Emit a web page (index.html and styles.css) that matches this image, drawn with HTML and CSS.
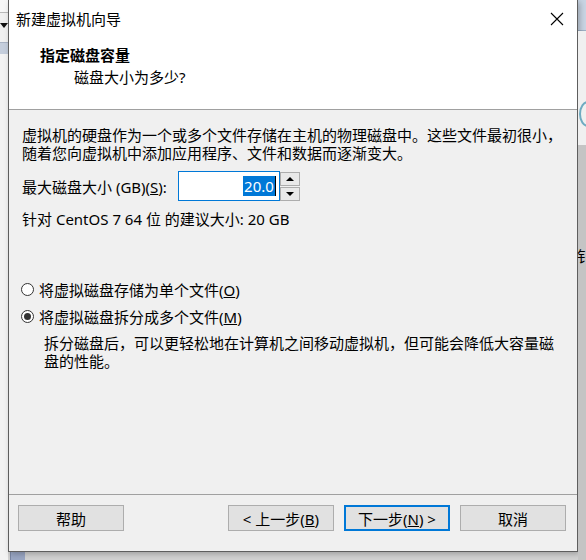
FILE: index.html
```html
<!DOCTYPE html>
<html lang="zh-CN">
<head>
    <meta charset="UTF-8">
    <meta name="viewport" content="width=device-width, initial-scale=1.0">
    <title>新建虚拟机向导</title>
    <link rel="stylesheet" href="styles.css">
</head>
<body>

    <div class="screen">
        <div class="side side-left">
            <div class="left-top"></div>
            <div class="left-arrow"></div>
            <div class="left-bar"></div>
            <div class="left-rest"></div>
        </div>

        <div class="middle">
            <div class="dialog">
                <div class="header">
                    <div class="titlebar">
                        <span class="title">新建虚拟机向导</span>
                        <svg class="close" width="14" height="14" viewBox="0 0 14 14">
                            <path d="M1 1 L13 13 M13 1 L1 13" stroke="#000" stroke-width="1.1" fill="none"/>
                        </svg>
                    </div>
                    <div class="heading">指定磁盘容量</div>
                    <div class="subheading">磁盘大小为多少?</div>
                </div>

                <div class="content">
                    <p class="intro">虚拟机的硬盘作为一个或多个文件存储在主机的物理磁盘中。这些文件最初很小，<br>随着您向虚拟机中添加应用程序、文件和数据而逐渐变大。</p>

                    <div class="size-row">
                        <label class="size-label">最大磁盘大小 (GB)(<u>S</u>):</label>
                        <div class="spin">
                            <div class="spin-input"><span class="selected">20.0</span><span class="caret"></span></div>
                            <div class="spin-buttons">
                                <div class="spin-btn"><span class="arrow-up"></span></div>
                                <div class="spin-btn"><span class="arrow-down"></span></div>
                            </div>
                        </div>
                    </div>

                    <div class="recommend">针对 CentOS 7 64 位 的建议大小: 20 GB</div>

                    <div class="radio-row first">
                        <span class="radio"></span>
                        <span>将虚拟磁盘存储为单个文件(<u>O</u>)</span>
                    </div>
                    <div class="radio-row">
                        <span class="radio checked"></span>
                        <span>将虚拟磁盘拆分成多个文件(<u>M</u>)</span>
                    </div>
                    <p class="radio-note">拆分磁盘后，可以更轻松地在计算机之间移动虚拟机，但可能会降低大容量磁<br>盘的性能。</p>
                </div>

                <div class="footer">
                    <button class="btn">帮助</button>
                    <div class="nav-buttons">
                        <button class="btn">&lt; 上一步(<u>B</u>)</button>
                        <button class="btn default">下一步(<u>N</u>) &gt;</button>
                        <button class="btn">取消</button>
                    </div>
                </div>
            </div>
            <div class="bottom-strip">
                <div class="bottom-blue"></div>
            </div>
        </div>

        <div class="side side-right">
            <div class="right-top"></div>
            <div class="right-mid"><span class="right-arc"></span></div>
            <div class="right-gray"><span class="right-char">钅</span></div>
        </div>
    </div>

</body>
</html>
```

FILE: styles.css
```css
body {
    margin: 0;
    font-family: "Noto Sans", "Noto Sans CJK SC", sans-serif;
    font-size: 15px;
    color: #000;
    background-color: #c8c8c8;
}
.screen {
    display: flex;
    width: 586px;
    height: 560px;
    overflow: hidden;
}
.side {
    width: 8px;
    display: flex;
    flex-direction: column;
}
.left-top {
    height: 12px;
    background-color: #f7f7f7;
    border-bottom: 1px solid #b9b9b9;
}
.left-arrow {
    height: 29px;
    background-color: #f0f0f0;
    position: relative;
}
.left-arrow::after {
    content: "";
    position: absolute;
    left: 0;
    top: 10px;
    border-left: 4px solid transparent;
    border-right: 4px solid transparent;
    border-top: 5px solid #111;
}
.left-bar {
    height: 11px;
    background-color: #c5cedc;
    border-top: 1px solid #a9b3c4;
}
.left-rest {
    flex: 1;
    background-color: #f3f3f3;
}
.middle {
    width: 570px;
    display: flex;
    flex-direction: column;
}
.dialog {
    height: 551px;
    display: flex;
    flex-direction: column;
    border: 1px solid #5e5e5e;
    border-top: none;
    background-color: #f0f0f0;
    box-shadow: 2px 2px 6px rgba(0, 0, 0, 0.25);
    position: relative;
}
.header {
    height: 109px;
    background-color: #fff;
    border-bottom: 1px solid #a0a0a0;
}
.titlebar {
    height: 38px;
    display: flex;
    align-items: center;
    justify-content: space-between;
    padding: 0 13px 0 7px;
}
.title {
    line-height: 38px;
}
.close {
    display: block;
}
.heading {
    font-weight: bold;
    line-height: 20px;
    margin-top: 7px;
    padding-left: 31px;
}
.subheading {
    line-height: 20px;
    margin-top: 2px;
    padding-left: 65px;
}
.content {
    flex: 1;
    padding: 16px 13px 0 13px;
}
.intro {
    margin: 0;
    line-height: 18px;
}
.size-row {
    display: flex;
    align-items: center;
    margin-top: 9px;
    height: 30px;
}
.size-label {
    margin-right: 11px;
}
.spin {
    display: flex;
    align-items: center;
}
.spin-input {
    width: 97px;
    height: 28px;
    border: 1px solid #0078d7;
    background-color: #fff;
    display: flex;
    align-items: center;
    justify-content: flex-end;
    padding-right: 3px;
}
.selected {
    background-color: #0078d7;
    color: #fff;
    line-height: 20px;
    padding: 0 1px;
}
.caret {
    width: 1px;
    height: 20px;
    background-color: #000;
}
.spin-buttons {
    display: flex;
    flex-direction: column;
    gap: 1px;
}
.spin-btn {
    width: 18px;
    height: 12px;
    border: 1px solid #adadad;
    background-color: #e9e9e9;
    display: flex;
    align-items: center;
    justify-content: center;
}
.arrow-up {
    border-left: 4px solid transparent;
    border-right: 4px solid transparent;
    border-bottom: 4px solid #000;
}
.arrow-down {
    border-left: 4px solid transparent;
    border-right: 4px solid transparent;
    border-top: 4px solid #000;
}
.recommend {
    margin-top: 9px;
    line-height: 18px;
}
.radio-row {
    display: flex;
    align-items: center;
    height: 20px;
    margin-top: 7px;
}
.radio-row.first {
    margin-top: 51px;
}
.radio {
    width: 11px;
    height: 11px;
    border: 1px solid #333;
    border-radius: 50%;
    background-color: #fff;
    margin-right: 5px;
    margin-left: -1px;
    position: relative;
}
.radio.checked::after {
    content: "";
    position: absolute;
    left: 2px;
    top: 2px;
    width: 7px;
    height: 7px;
    border-radius: 50%;
    background-color: #333;
}
.radio-note {
    margin: 8px 0 0 22px;
    line-height: 18px;
}
.footer {
    height: 36px;
    border-top: 1px solid #a0a0a0;
    padding: 10px 11px 10px 9px;
    display: flex;
    justify-content: space-between;
}
.nav-buttons {
    display: flex;
    gap: 10px;
}
.btn {
    width: 106px;
    height: 26px;
    font-family: inherit;
    font-size: 15px;
    background-color: #e1e1e1;
    border: 1px solid #adadad;
    padding: 0;
    color: #000;
}
.btn.default {
    border: 2px solid #0078d7;
}
.bottom-strip {
    flex: 1;
    background-color: #d2d2d2;
    display: flex;
}
.bottom-blue {
    width: 14px;
    margin-left: 2px;
    background-color: #9aa7c4;
    border-left: 1px solid #7a86a3;
}
.right-top {
    height: 30px;
    background-color: #c9d5e4;
    border-bottom: 1px solid #9fb1c7;
}
.right-mid {
    height: 114px;
    background-color: #f0f0f0;
    position: relative;
}
.right-arc {
    position: absolute;
    left: 1px;
    top: 70px;
    width: 14px;
    height: 22px;
    border: 2px solid #6eabc1;
    border-radius: 50%;
}
.right-gray {
    flex: 1;
    background-color: #c4c4c4;
    position: relative;
}
.right-char {
    position: absolute;
    left: -1px;
    top: 102px;
    font-family: "Noto Sans CJK SC", sans-serif;
    font-size: 15px;
    line-height: 18px;
}
```
